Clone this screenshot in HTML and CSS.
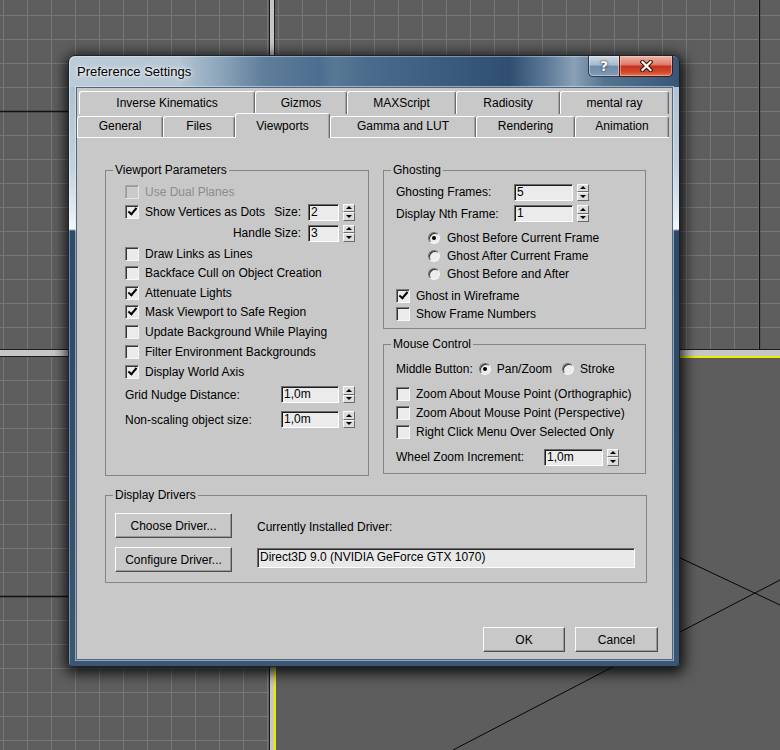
FILE: index.html
```html
<!DOCTYPE html>
<html lang="en">
<head>
    <meta charset="UTF-8">
    <title>Preference Settings</title>
    <link rel="stylesheet" href="styles.css">
</head>
<body>
    <!-- 3ds Max viewports behind the dialog -->
    <div class="viewports">
        <div class="vp grid vp-tl">
            <svg><line x1="0" y1="111.5" x2="270" y2="111.5" stroke="#111" stroke-width="1.4"/></svg>
        </div>
        <div class="vp grid vp-tr">
            <svg><line x1="484.5" y1="0" x2="484.5" y2="350" stroke="#111" stroke-width="1.2"/></svg>
        </div>
        <div class="vp grid vp-bl">
            <svg><line x1="0" y1="239.5" x2="270" y2="239.5" stroke="#111" stroke-width="1.4"/></svg>
        </div>
        <div class="vp vp-br">
            <svg>
                <line x1="177" y1="392" x2="504" y2="222" stroke="#050505" stroke-width="1"/>
                <line x1="364" y1="181" x2="504" y2="247" stroke="#050505" stroke-width="1"/>
            </svg>
        </div>
    </div>

    <div class="dialog">
        <div class="titlebar">
            <span class="title">Preference Settings</span>
            <div class="caption-btns">
                <span class="cap-help">?</span>
                <span class="cap-close">
                    <svg width="13" height="12" viewBox="0 0 13 12">
                        <path d="M2.5 2 L10.5 10 M10.5 2 L2.5 10" stroke="#3c0d07" stroke-width="4.2" stroke-linecap="square"/>
                        <path d="M2.5 2 L10.5 10 M10.5 2 L2.5 10" stroke="#fff" stroke-width="2.2" stroke-linecap="square"/>
                    </svg>
                </span>
            </div>
        </div>

        <div class="client">
            <div class="tabs">
                <div class="tab-row back">
                    <div class="tab tab-ik">Inverse Kinematics</div>
                    <div class="tab tab-gizmos">Gizmos</div>
                    <div class="tab tab-maxscript">MAXScript</div>
                    <div class="tab tab-radiosity">Radiosity</div>
                    <div class="tab tab-mental">mental ray</div>
                </div>
                <div class="tab-row front">
                    <div class="tab tab-general">General</div>
                    <div class="tab tab-files">Files</div>
                    <div class="tab tab-viewports active">Viewports</div>
                    <div class="tab tab-gamma">Gamma and LUT</div>
                    <div class="tab tab-rendering">Rendering</div>
                    <div class="tab tab-animation">Animation</div>
                </div>
            </div>

            <div class="page">
                <div class="columns">
                    <!-- Viewport Parameters -->
                    <fieldset class="group vp-params">
                        <legend>Viewport Parameters</legend>
                        <div class="vp-body">
                            <div class="row disabled"><span class="check dis"></span>Use Dual Planes</div>
                            <div class="row">
                                <span class="check on"></span>Show Vertices as Dots
                                <span class="push lbl-r">Size:</span>
                                <div class="num"><span class="field w31">2</span><span class="spin"><i class="up"></i><i class="down"></i></span></div>
                            </div>
                            <div class="row h22 right">
                                <span class="lbl-r">Handle Size:</span>
                                <div class="num"><span class="field w31">3</span><span class="spin"><i class="up"></i><i class="down"></i></span></div>
                            </div>
                            <div class="row h19"><span class="check"></span>Draw Links as Lines</div>
                            <div class="row"><span class="check"></span>Backface Cull on Object Creation</div>
                            <div class="row h19"><span class="check on"></span>Attenuate Lights</div>
                            <div class="row"><span class="check on"></span>Mask Viewport to Safe Region</div>
                            <div class="row"><span class="check"></span>Update Background While Playing</div>
                            <div class="row"><span class="check"></span>Filter Environment Backgrounds</div>
                            <div class="row"><span class="check on"></span>Display World Axis</div>
                            <div class="row h25">
                                Grid Nudge Distance:
                                <div class="num push"><span class="field w58">1,0m</span><span class="spin"><i class="up"></i><i class="down"></i></span></div>
                            </div>
                            <div class="row h25">
                                Non-scaling object size:
                                <div class="num push"><span class="field w58">1,0m</span><span class="spin"><i class="up"></i><i class="down"></i></span></div>
                            </div>
                        </div>
                    </fieldset>

                    <div class="right-col">
                        <!-- Ghosting -->
                        <fieldset class="group ghosting">
                            <legend>Ghosting</legend>
                            <div class="ghost-body">
                                <div class="row">
                                    <span class="lbl-ghost">Ghosting Frames:</span>
                                    <div class="num"><span class="field w59">5</span><span class="spin"><i class="up"></i><i class="down"></i></span></div>
                                </div>
                                <div class="row h23">
                                    <span class="lbl-ghost">Display Nth Frame:</span>
                                    <div class="num"><span class="field w59">1</span><span class="spin"><i class="up"></i><i class="down"></i></span></div>
                                </div>
                                <div class="radio-list">
                                    <div class="row h18"><span class="radio on"></span>Ghost Before Current Frame</div>
                                    <div class="row h18"><span class="radio"></span>Ghost After Current Frame</div>
                                    <div class="row h18"><span class="radio"></span>Ghost Before and After</div>
                                </div>
                                <div class="check-list">
                                    <div class="row h18"><span class="check on"></span>Ghost in Wireframe</div>
                                    <div class="row h18"><span class="check"></span>Show Frame Numbers</div>
                                </div>
                            </div>
                        </fieldset>

                        <!-- Mouse Control -->
                        <fieldset class="group mouse">
                            <legend>Mouse Control</legend>
                            <div class="mouse-body">
                                <div class="row middle">
                                    Middle Button:
                                    <span class="radio on"></span>Pan/Zoom
                                    <span class="radio"></span>Stroke
                                </div>
                                <div class="check-list">
                                    <div class="row h19"><span class="check"></span>Zoom About Mouse Point (Orthographic)</div>
                                    <div class="row h19"><span class="check"></span>Zoom About Mouse Point (Perspective)</div>
                                    <div class="row h19"><span class="check"></span>Right Click Menu Over Selected Only</div>
                                </div>
                                <div class="row h24 wheel">
                                    <span class="lbl-wheel">Wheel Zoom Increment:</span>
                                    <div class="num"><span class="field w59">1,0m</span><span class="spin"><i class="up"></i><i class="down"></i></span></div>
                                </div>
                            </div>
                        </fieldset>
                    </div>
                </div>

                <!-- Display Drivers -->
                <fieldset class="group drivers">
                    <legend>Display Drivers</legend>
                    <div class="drivers-body">
                        <div class="driver-btns">
                            <button class="btn driver-btn">Choose Driver...</button>
                            <button class="btn driver-btn">Configure Driver...</button>
                        </div>
                        <div class="driver-info">
                            <div class="driver-label">Currently Installed Driver:</div>
                            <div class="textbox">Direct3D 9.0 (NVIDIA GeForce GTX 1070)</div>
                        </div>
                    </div>
                </fieldset>
            </div>

            <div class="footer">
                <button class="btn ok-btn">OK</button>
                <button class="btn cancel-btn">Cancel</button>
            </div>
        </div>
    </div>
</body>
</html>
```

FILE: styles.css
```css
* {
    box-sizing: border-box;
}

body {
    margin: 0;
    width: 780px;
    height: 750px;
    overflow: hidden;
    position: relative;
    background: #c6c6c6;
    font-family: "Liberation Sans", Arial, sans-serif;
    font-size: 12px;
    color: #000;
}

/* ---------- viewports ---------- */
.viewports {
    display: grid;
    grid-template-columns: 270px 1fr;
    grid-template-rows: 350px 1fr;
    column-gap: 4px;
    row-gap: 6px;
    width: 780px;
    height: 750px;
    background: #c6c6c6;
}

.vp {
    background-color: #5e5e5e;
    overflow: hidden;
}

.vp svg {
    display: block;
    width: 100%;
    height: 100%;
}

.grid {
    background-image:
        linear-gradient(90deg, #777 1px, transparent 1px),
        linear-gradient(#777 1px, transparent 1px);
    background-size: 24px 24px;
}

.vp-tl {
    border-right: 1px solid #1c1c1c;
    border-bottom: 1px solid #1c1c1c;
    background-position: 3px 15px;
}

.vp-tr {
    border-left: 1px solid #1c1c1c;
    border-bottom: 1px solid #1c1c1c;
    background-position: 3px 15px;
}

.vp-bl {
    border-right: 1px solid #1c1c1c;
    border-top: 1px solid #1c1c1c;
    background-position: 3px 23px;
}

.vp-br {
    border-left: 2px solid #ecec00;
    border-top: 2px solid #ecec00;
    background-color: #5d5d5d;
}

/* ---------- dialog frame ---------- */
.dialog {
    position: absolute;
    left: 68px;
    top: 55px;
    width: 612px;
    height: 612px;
    display: flex;
    flex-direction: column;
    padding: 0 6px 6px 7px;
    border: 1px solid #18242f;
    border-radius: 7px 7px 4px 4px;
    background:
        linear-gradient(90deg, #bccbd8 0, #b4c5d3 110px, #8ea6bb 150px, #5f7e9b 195px, #4d6e8f 250px, #587895 265px, #4a6b8c 300px, #3d5d7e 370px, #2f4e70 440px, #5d7b99 478px, #8aa1b6 505px, #557491 535px, #385777 100%) top / 100% 31px no-repeat,
        linear-gradient(180deg, #a9bccc 0, #c3d1dd 110px, #e6edf2 160px, #f5f8fa 173px, #2e4a69 175px, #2f4c6b 60%, #3a5674 100%);
    box-shadow: 1px 3px 14px 3px rgba(0, 0, 0, 0.85), inset 1px 1px 0 rgba(255, 255, 255, 0.35);
}

.titlebar {
    display: flex;
    height: 31px;
    flex: none;
}

.title {
    margin-left: 1px;
    font-size: 13px;
    line-height: 32px;
    text-shadow: 0 0 6px #fff, 0 0 3px #fff;
}

.caption-btns {
    display: flex;
    margin-left: auto;
    height: 21px;
}

.cap-help {
    width: 31px;
    height: 21px;
    border: 1px solid #2c3d4f;
    border-top: none;
    border-right: none;
    border-radius: 0 0 0 5px;
    background: linear-gradient(#cfdbe5, #a5b8ca 45%, #6f8ba7 52%, #7f9bb6 100%);
    box-shadow: inset 0 0 0 1px rgba(255, 255, 255, 0.4);
    color: #fff;
    font: bold 14px "DejaVu Sans", sans-serif;
    line-height: 20px;
    text-align: center;
    text-shadow: 0 0 2px #1c2a38, 0 0 1px #1c2a38;
}

.cap-close {
    width: 54px;
    height: 21px;
    display: flex;
    align-items: center;
    justify-content: center;
    border: 1px solid #4a1510;
    border-top: none;
    border-radius: 0 0 5px 0;
    background: linear-gradient(#efb4a6, #de7f6b 42%, #c73320 52%, #cf4a2c 80%, #e2774c 100%);
    box-shadow: inset 0 0 0 1px rgba(255, 220, 210, 0.45);
}

/* ---------- client area ---------- */
.client {
    flex: 1;
    display: flex;
    flex-direction: column;
    background: #c8c8c8;
    border: 1px solid #4e6680;
    box-shadow: 0 0 0 1px rgba(225, 235, 244, 0.55);
}

.tabs {
    padding-top: 3px;
}

.tab-row {
    display: flex;
    height: 23px;
}

.tab-row.back {
    margin-left: 2px;
}

.tab-row.front {
    align-items: flex-end;
}

.tab {
    height: 23px;
    line-height: 22px;
    text-align: center;
    white-space: nowrap;
    background: #c8c8c8;
    border-top: 1px solid #fff;
    border-left: 1px solid #fff;
    border-right: 1px solid #6c6c6c;
    box-shadow: inset -1px 0 0 #a4a4a4;
    border-radius: 3px 3px 0 0;
}

.tab-row.front .tab {
    height: 21px;
    line-height: 19px;
}

.tab-row.front .tab.active {
    height: 25px;
    line-height: 24px;
    margin-bottom: -1px;
    position: relative;
    z-index: 1;
}

.tab-ik { width: 176px; }
.tab-gizmos { width: 92px; }
.tab-maxscript { width: 109px; }
.tab-radiosity { width: 104px; }
.tab-mental { width: 109px; }
.tab-general { width: 86px; }
.tab-files { width: 72px; }
.tab-viewports { width: 95px; }
.tab-gamma { width: 146px; }
.tab-rendering { width: 99px; }
.tab-animation { width: 94px; }

.page {
    margin-right: 3px;
    border-top: 1px solid #fff;
    padding: 25px 0 0 28px;
}

.columns {
    display: flex;
    align-items: flex-start;
    gap: 14px;
}

/* ---------- group boxes ---------- */
fieldset.group {
    margin: 0;
    padding: 0;
    min-width: 0;
    border: 1px solid #858585;
}

fieldset.group legend {
    margin-left: 7px;
    padding: 0 2px;
    line-height: 14px;
}

fieldset.vp-params {
    width: 264px;
}

.vp-body {
    padding: 5px 13px 43px 19px;
}

.right-col {
    width: 263px;
}

.ghost-body {
    padding: 5px 0 5px 12px;
}

fieldset.mouse {
    margin-top: 8px;
}

.mouse-body {
    padding: 8px 0 4px 12px;
}

fieldset.drivers {
    width: 542px;
    margin-top: 12px;
}

/* ---------- rows and controls ---------- */
.row {
    display: flex;
    align-items: center;
    height: 20px;
    white-space: nowrap;
}

.row.h18 { height: 18px; }
.row.h19 { height: 19px; }
.row.h22 { height: 22px; }
.row.h23 { height: 23px; }
.row.h24 { height: 24px; }
.row.h25 { height: 25px; }

.row.right {
    justify-content: flex-end;
}

.row.disabled {
    color: #8c8c8c;
}

.push {
    margin-left: auto;
}

.lbl-r {
    margin-right: 7px;
}

.lbl-ghost {
    width: 118px;
}

.lbl-wheel {
    width: 148px;
}

.radio-list {
    margin: 4px 0 4px 32px;
}

.mouse-body .check-list {
    margin: 5px 0 4px;
}

.check {
    flex: none;
    position: relative;
    width: 14px;
    height: 14px;
    margin-right: 6px;
    background: #ebebeb;
    border: 1px solid;
    border-color: #7a7a7a #f8f8f8 #f8f8f8 #7a7a7a;
    box-shadow: inset 1px 1px 0 #353535;
}

.check.on::after {
    content: "";
    position: absolute;
    left: 4px;
    top: 0px;
    width: 3px;
    height: 7px;
    border: solid #000;
    border-width: 0 2px 2px 0;
    transform: rotate(40deg);
}

.check.dis {
    background: #cbcbcb;
    border-color: #a6a6a6 #e6e6e6 #e6e6e6 #a6a6a6;
    box-shadow: inset 1px 1px 0 #9a9a9a;
}

.radio {
    flex: none;
    width: 12px;
    height: 12px;
    margin-right: 7px;
    display: flex;
    align-items: center;
    justify-content: center;
    border-radius: 50%;
    background: #ececec;
    border: 1px solid;
    border-color: #707070 #f6f6f6 #f6f6f6 #707070;
    box-shadow: inset 1px 1px 0 #2e2e2e;
}

.radio.on::after {
    content: "";
    width: 4px;
    height: 4px;
    border-radius: 50%;
    background: #000;
}

.middle .radio {
    margin-left: 6px;
    margin-right: 6px;
}

.middle .radio:last-of-type {
    margin-left: 10px;
}

.num {
    display: flex;
    align-items: center;
    gap: 4px;
}

.field {
    height: 17px;
    padding-left: 2px;
    line-height: 15px;
    background: #ebebeb;
    border: 1px solid;
    border-color: #6a6a6a #fff #fff #6a6a6a;
    box-shadow: inset 1px 1px 0 #1c1c1c;
}

.w31 { width: 31px; }
.w58 { width: 58px; }
.w59 { width: 59px; }

.spin {
    display: flex;
    flex-direction: column;
    width: 12px;
    height: 17px;
}

.spin i {
    flex: 1;
    display: flex;
    align-items: center;
    justify-content: center;
    background: #dcdcdc;
    border: 1px solid;
    border-color: #fafafa #6a6a6a #6a6a6a #fafafa;
}

.spin i::after {
    content: "";
    border-left: 3px solid transparent;
    border-right: 3px solid transparent;
}

.spin .up::after {
    border-bottom: 3px solid #000;
}

.spin .down::after {
    border-top: 3px solid #000;
}

/* ---------- display drivers ---------- */
.drivers-body {
    display: flex;
    padding: 11px 11px 10px 9px;
}

.driver-btns {
    display: flex;
    flex-direction: column;
    gap: 9px;
}

.driver-info {
    flex: 1;
    margin-left: 25px;
}

.driver-label {
    line-height: 28px;
}

.textbox {
    margin-top: 7px;
    height: 20px;
    padding-left: 2px;
    line-height: 17px;
    background: #e9e9e9;
    border: 1px solid;
    border-color: #6c6c6c #fff #fff #6c6c6c;
    box-shadow: inset 1px 1px 0 #2c2c2c;
}

/* ---------- buttons ---------- */
.btn {
    height: 25px;
    padding: 0;
    font: inherit;
    color: #000;
    text-align: center;
    background: #c8c8c8;
    border: 1px solid;
    border-color: #fafafa #4e4e4e #4e4e4e #fafafa;
    box-shadow: inset -1px -1px 0 #979797;
}

.driver-btn {
    width: 117px;
}

.footer {
    margin-top: auto;
    display: flex;
    justify-content: flex-end;
    gap: 10px;
    padding: 0 14px 7px 0;
}

.ok-btn {
    width: 82px;
}

.cancel-btn {
    width: 83px;
}
```
